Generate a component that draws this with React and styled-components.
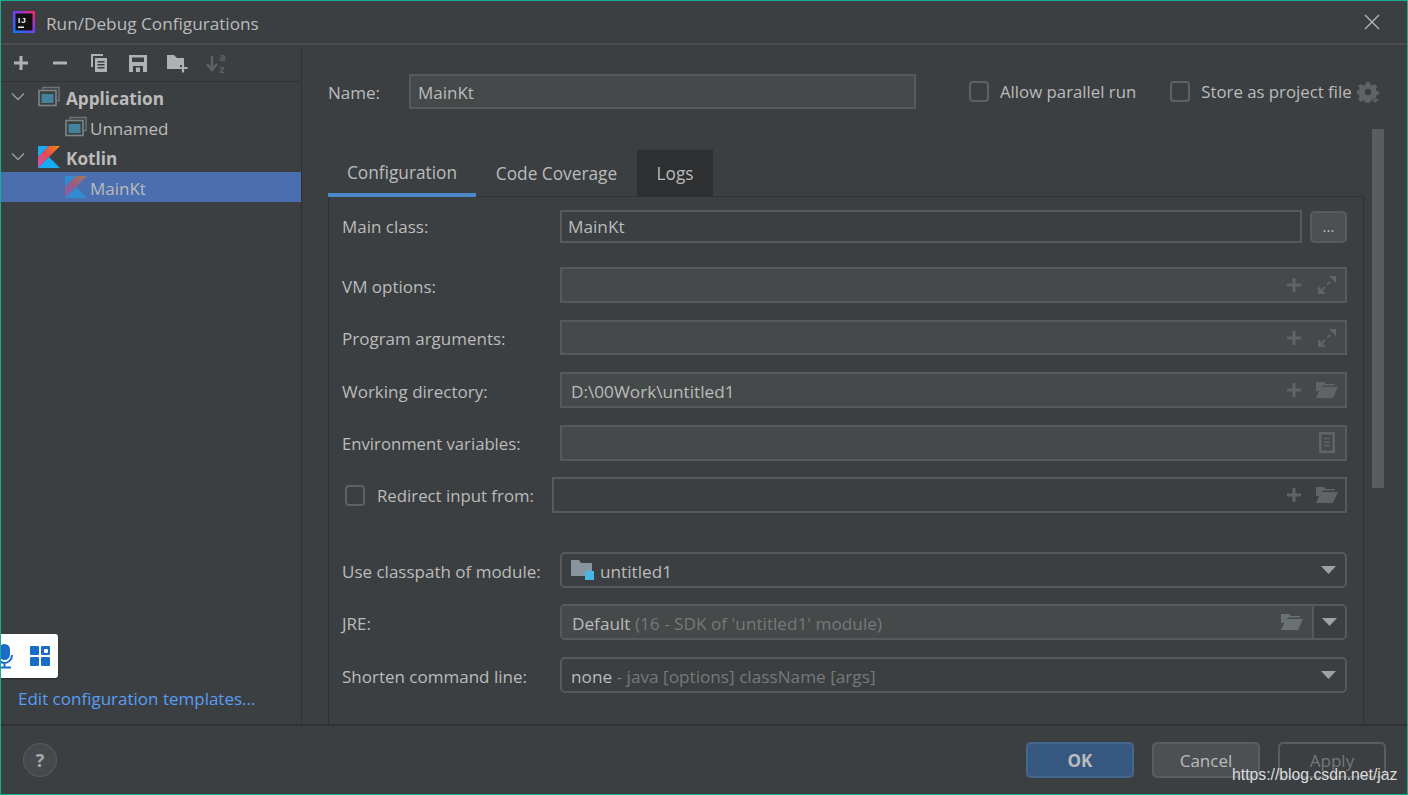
import React from "react";
import styled, { createGlobalStyle } from "styled-components";

const Global = createGlobalStyle`
  html, body { margin: 0; padding: 0; background: #3c3f41; }
  * { box-sizing: border-box; }
  body { font-family: "Open Sans", "Noto Sans", sans-serif; font-size: 17px; color: #bbbbbb; }
`;

const Window = styled.div`
  position: relative;
  width: 1408px; height: 795px; overflow: hidden;
  display: flex; flex-direction: column;
  background: #3c3f41;
  border: 1px solid #12b08f;
`;
const TitleBar = styled.div`
  height: 44px; flex: none;
  display: flex; align-items: center;
  padding: 0 27px 1px 12px;
  border-bottom: 2px solid #4a4c4e;
`;
const TitleText = styled.div`
  margin-left: 11px; flex: 1; font-size: 17.2px; color: #bbbbbb; padding-top: 3px;
`;
const Body = styled.div`
  flex: 1; min-height: 0; display: flex;
`;
const Sidebar = styled.div`
  width: 301px; flex: none;
  display: flex; flex-direction: column;
  border-right: 1px solid #323232;
`;
const Toolbar = styled.div`
  height: 37px; flex: none;
  display: flex; align-items: center; gap: 19px;
  padding-left: 10px;
  border-bottom: 1px solid #323232;
`;
const ToolIcon = styled.svg`
  width: 20px; height: 20px; flex: none; display: block;
`;
const Tree = styled.div`
  display: flex; flex-direction: column;
`;
const TreeRow = styled.div`
  height: 30px;
  display: flex; align-items: center;
  padding-left: ${p => p.$indent}px;
  background: ${p => (p.$selected ? "#4b6eaf" : "transparent")};
  font-weight: ${p => (p.$bold ? 700 : 400)};
  font-size: ${p => (p.$bold ? 17.2 : 17)}px;
  color: #bbbbbb;
`;
const TreeLabel = styled.span`
  padding-top: 2px;
`;
const Chevron = styled.svg`
  width: 14px; height: 10px; margin-right: 13px; flex: none;
`;
const TreeIcon = styled.svg`
  width: 22px; height: 22px; flex: none; margin-right: ${p => p.$gap}px;
`;
const EditLink = styled.div`
  margin-top: auto; padding: 0 0 13px 17px;
  color: #589df6; font-size: 17px; line-height: 24px;
`;

const Main = styled.div`
  flex: 1; min-width: 0; position: relative;
  display: flex; flex-direction: column;
  padding: 29px 0 0 26px;
`;
const NameRow = styled.div`
  height: 35px; flex: none; display: flex; align-items: center;
`;
const NameLabel = styled.div`
  width: 81px; flex: none; font-size: 17px; padding-top: 2px;
`;
const NameInput = styled.div`
  width: 507px; height: 35px; flex: none;
  display: flex; align-items: center; padding: 2px 0 0 7px;
  background: #45494a; border: 2px solid #57595a; font-size: 17px;
`;
const Check = styled.div`
  width: 20px; height: 21px; flex: none;
  background: #3c3f41; border: 2px solid #5f6163; border-radius: 4px;
`;
const CheckLabel = styled.div`
  font-size: 16.8px; margin-left: 11px; white-space: nowrap;
`;
const CheckGroup = styled.div`
  display: flex; align-items: center; margin-left: ${p => p.$ml}px;
`;
const Tabs = styled.div`
  margin-top: 41px; height: 47px; flex: none;
  width: 1036px; display: flex;
  border-bottom: 1px solid #323232;
`;
const Tab = styled.div`
  width: ${p => p.$w}px; height: 47px; flex: none;
  display: flex; align-items: center; justify-content: center;
  padding: ${p => (p.$active ? "2px 0 0" : "0 0 1px")};
  font-size: 17.3px;
  background: ${p => (p.$hover ? "#2d2f31" : "transparent")};
  border-bottom: ${p => (p.$active ? "4px solid #4a88c7" : "none")};
`;
const Panel = styled.div`
  flex: 1; min-height: 0; width: 1036px;
  padding: 13px 16px 0 13px;
  border-left: 1px solid #323232;
  border-right: 1px solid #323232;
  display: flex; flex-direction: column;
`;
const FormRow = styled.div`
  display: grid;
  grid-template-columns: ${p => p.$label || 218}px 1fr;
  align-items: center;
  margin-top: ${p => p.$mt || 0}px;
`;
const FormLabel = styled.div`
  font-size: ${p => p.$size || 17}px; white-space: nowrap; display: flex; align-items: center;
  padding-top: ${p => (p.$nudge ? 2 : 0)}px;
`;
const Field = styled.div`
  height: ${p => p.$h || 36}px;
  display: flex; align-items: center; gap: 13px;
  padding: 0 8px 0 ${p => p.$pl || 8}px;
  background: ${p => (p.$plain ? "transparent" : "#45494a")};
  border: 2px solid #57595a;
  font-size: 17.2px;
`;
const FieldText = styled.div`
  flex: 1; white-space: nowrap;
  padding-top: ${p => (p.$nudge ? 2 : 0)}px;
`;
const ClassRow = styled.div`
  display: flex; gap: 8px; align-items: center;
`;
const ClassField = styled(Field)`
  flex: 1;
`;
const DotsButton = styled.div`
  width: 37px; height: 32px; flex: none;
  background: #4c5052; border: 2px solid #595b5d; border-radius: 5px;
  display: flex; align-items: center; justify-content: center;
  font-size: 15px; padding-bottom: 2px;
`;
const Combo = styled.div`
  height: 36px; display: flex; align-items: stretch;
  border: 2px solid #57595a; border-radius: 5px;
  font-size: 17.2px; overflow: hidden;
`;
const ComboMain = styled.div`
  flex: 1; display: flex; align-items: center; gap: 5px;
  padding: 0 10px 0 ${p => p.$pl || 9}px;
  background: ${p => (p.$disabled ? "#45494a" : "transparent")};
`;
const ComboText = styled.div`
  flex: 1; white-space: nowrap; padding-top: 2px;
`;
const ComboArrow = styled.div`
  width: 33px; flex: none; display: flex; align-items: center; justify-content: center;
  border-left: ${p => (p.$split ? "2px solid #57595a" : "none")};
`;
const Dim = styled.span`
  color: #787878;
`;
const Scrollbar = styled.div`
  position: absolute; left: 1070px; top: 84px;
  width: 12px; height: 359px; background: #5a5c5e;
`;
const Footer = styled.div`
  height: 70px; flex: none;
  display: flex; align-items: center;
  padding: 0 21px 0 22px;
  border-top: 2px solid #323232;
`;
const Help = styled.div`
  width: 34px; height: 34px; border-radius: 50%;
  display: flex; align-items: center; justify-content: center;
  background: #46494b; border: 1.5px solid #5b5d5f;
  font-weight: 700; font-size: 18px; color: #a9abad;
`;
const Buttons = styled.div`
  margin-left: auto; display: flex; gap: 18px;
`;
const Button = styled.div`
  width: 108px; height: 36px;
  display: flex; align-items: center; justify-content: center;
  border-radius: 5px; font-size: 17px;
  font-weight: ${p => (p.$primary ? 700 : 400)};
  color: ${p => (p.$disabled ? "#777777" : "#bbbbbb")};
  background: ${p => (p.$primary ? "#365880" : p.$disabled ? "transparent" : "#4c5052")};
  border: 2px solid ${p => (p.$primary ? "#43688c" : "#5a5c5e")};
`;
const Overlay = styled.div`
  position: absolute; left: -1px; top: 633px;
  width: 58px; height: 44px;
  background: #ffffff; border-radius: 0 3px 3px 0;
  box-shadow: 0 1px 2px rgba(0,0,0,.4);
  display: flex; align-items: center;
`;
const Watermark = styled.div`
  position: absolute; left: 1231px; top: 764px;
  font-family: "Liberation Sans", Arial, sans-serif; font-size: 15.75px;
  color: #dcdcdc; white-space: nowrap; line-height: 20px;
`;

const Plus = ({ c = "#afb1b3" }) => (
  <ToolIcon viewBox="0 0 20 20"><path d="M10 3v14M3 10h14" stroke={c} strokeWidth="3" /></ToolIcon>
);
const Minus = () => (
  <ToolIcon viewBox="0 0 20 20"><path d="M3 10h14" stroke="#afb1b3" strokeWidth="3" /></ToolIcon>
);
const Copy = () => (
  <ToolIcon viewBox="0 0 20 20">
    <path d="M2 1h12v2H4v11H2z" fill="#afb1b3" />
    <path fillRule="evenodd" d="M6 5h12v14H6zM8.5 8v1.5h7V8zM8.5 11v1.5h7V11zM8.5 14v1.5h7V14z" fill="#afb1b3" />
  </ToolIcon>
);
const Save = () => (
  <ToolIcon viewBox="0 0 20 20">
    <path fillRule="evenodd" d="M1 2h18v17H1zM4 4.5v4.5h12V4.5zM5 13v6h10v-6zM8 14.5h4V19H8z" fill="#afb1b3" />
  </ToolIcon>
);
const FolderPlus = () => (
  <ToolIcon viewBox="0 0 22 20" style={{ width: 22, marginRight: -2 }}>
    <path d="M0 2h7l3 3h7v7h-4v4H0z" fill="#afb1b3" />
    <path d="M16 10.5v9M11.5 15h9" stroke="#afb1b3" strokeWidth="2.2" />
  </ToolIcon>
);
const SortAz = () => (
  <ToolIcon viewBox="0 -3 22 26" style={{ width: 22, height: 26 }}>
    <path d="M6 3v12M1 11l5 6 5-6" stroke="#5f6264" strokeWidth="2.4" fill="none" />
    <text x="13.5" y="7.5" fontSize="10" fontWeight="700" fill="#5f6264" fontFamily="Open Sans">a</text>
    <text x="13.5" y="19.5" fontSize="10" fontWeight="700" fill="#5f6264" fontFamily="Open Sans">z</text>
  </ToolIcon>
);
const Down = () => (
  <Chevron viewBox="0 0 14 10"><path d="M1 1.5l6 6 6-6" stroke="#9a9c9e" strokeWidth="1.4" fill="none" /></Chevron>
);
const AppIcon = ({ gap }) => (
  <TreeIcon viewBox="0 0 22 22" $gap={gap}>
    <path d="M5 3.5V1.5h16v13h-2" stroke="#6e7678" strokeWidth="1.4" fill="none" />
    <rect x="1" y="4.5" width="17" height="15" fill="none" stroke="#7b8688" strokeWidth="1.6" />
    <rect x="3.5" y="8" width="12" height="9" fill="#44839e" />
  </TreeIcon>
);
const KotlinIcon = ({ gap, id, dim }) => (
  <TreeIcon viewBox="0 0 22 22" $gap={gap} style={{ opacity: dim ? 0.5 : 1 }}>
    <defs>
      <linearGradient id={id + "a"} x1="0" y1="1" x2="1" y2="0">
        <stop offset="0" stopColor="#c757bc" /><stop offset="0.5" stopColor="#e44857" /><stop offset="1" stopColor="#f88909" />
      </linearGradient>
    </defs>
    <path d="M0 0h11L0 11z" fill="#18a9f7" />
    <path d="M11 0h11L0 22V11z" fill={`url(#${id}a)`} />
    <path d="M11 11l11 11H0z" fill="#18a9f7" />
  </TreeIcon>
);
const Expand = () => (
  <ToolIcon viewBox="0 0 20 20">
    <path d="M1 19l0-8 8 8zM19 1v7l-7-7z" fill="#5f6567" />
    <path d="M5 15l10-10" stroke="#5f6567" strokeWidth="1.8" strokeDasharray="4.5 3" />
  </ToolIcon>
);
const Folder = ({ c = "#5f6567" }) => (
  <ToolIcon viewBox="0 0 24 20" style={{ width: 24, margin: "0 -2px" }}>
    <path d="M1 2h8l2 2h9v1.5H8L4 11H1z" fill={c} />
    <path d="M6 7h17l-5 11H1z" fill={c} />
  </ToolIcon>
);
const Doc = () => (
  <ToolIcon viewBox="0 0 20 22" style={{ height: 22 }}>
    <path fillRule="evenodd" d="M2 0h16v21H2zM4.5 2.5v16h11v-16z" fill="#5f6567" />
    <path d="M7 6.5h6M7 10h6M7 13.5h6" stroke="#5f6567" strokeWidth="1.5" />
  </ToolIcon>
);
const Arrow = () => (
  <svg width="15" height="8" viewBox="0 0 15 8"><path d="M0 0h15l-7.5 8z" fill="#9fa1a3" /></svg>
);
const ModuleFolder = () => (
  <svg width="24" height="22" viewBox="0 0 24 22" style={{ flex: "none" }}>
    <path d="M0 1h8l2 3h11v13H0z" fill="#8a949c" />
    <rect x="14" y="12" width="9" height="9" fill="#45b6e6" />
  </svg>
);

export default function App() {
  return (
    <Window>
      <Global />
      <TitleBar>
        <svg width="22" height="22" viewBox="0 0 22 22" style={{ flex: "none" }}>
          <defs>
            <linearGradient id="ij" x1="0" y1="1" x2="1" y2="0">
              <stop offset="0" stopColor="#087cfa" /><stop offset="0.55" stopColor="#7a3cf0" /><stop offset="1" stopColor="#fe2857" />
            </linearGradient>
          </defs>
          <rect width="22" height="22" fill="url(#ij)" />
          <rect x="2.5" y="2.5" width="17" height="17" fill="#111" />
          <text x="5" y="11.5" fontSize="8" fontWeight="700" fill="#fff" fontFamily="Liberation Sans" letterSpacing="1">IJ</text>
          <rect x="5" y="15.5" width="6" height="1.4" fill="#fff" />
        </svg>
        <TitleText>Run/Debug Configurations</TitleText>
        <svg width="16" height="16" viewBox="0 0 16 16"><path d="M1 1l14 14M15 1L1 15" stroke="#b4b6b8" strokeWidth="1.4" /></svg>
      </TitleBar>
      <Body>
        <Sidebar>
          <Toolbar>
            <Plus /><Minus /><Copy /><Save /><FolderPlus /><SortAz />
          </Toolbar>
          <Tree>
            <TreeRow $indent={10} $bold><Down /><AppIcon gap={6} /><TreeLabel>Application</TreeLabel></TreeRow>
            <TreeRow $indent={64}><AppIcon gap={3} /><TreeLabel>Unnamed</TreeLabel></TreeRow>
            <TreeRow $indent={10} $bold><Down /><KotlinIcon gap={6} id="k1" /><TreeLabel>Kotlin</TreeLabel></TreeRow>
            <TreeRow $indent={64} $selected><KotlinIcon gap={3} id="k2" dim /><TreeLabel>MainKt</TreeLabel></TreeRow>
          </Tree>
          <EditLink>Edit configuration templates...</EditLink>
        </Sidebar>
        <Main>
          <NameRow>
            <NameLabel>Name:</NameLabel>
            <NameInput>MainKt</NameInput>
            <CheckGroup $ml={53}><Check /><CheckLabel>Allow parallel run</CheckLabel></CheckGroup>
            <CheckGroup $ml={34}><Check /><CheckLabel>Store as project file</CheckLabel></CheckGroup>
            <svg width="22" height="22" viewBox="0 0 24 24" style={{ marginLeft: 5, flex: "none" }}>
              <path fillRule="evenodd" fill="#5f6365" d="M10 1h4l.6 3 2.2.9 2.6-1.7 2.8 2.8-1.7 2.6.9 2.2 3 .6v3.2l-3 .6-.9 2.2 1 1.6h-5l-1 3-1.5.6-.6 2.4h-4l-.6-3-2.2-.9-2.6 1.7-2.8-2.8 1.7-2.6-.9-2.2-3-.6v-4l3-.6.9-2.2-1.7-2.6L4.6 3.2l2.6 1.7 2.2-.9zM12 8.5a3.5 3.5 0 100 7 3.5 3.5 0 000-7z" />
              <path d="M16 20h8l-4 4z" fill="#5f6365" />
            </svg>
          </NameRow>
          <Tabs>
            <Tab $w={148} $active>Configuration</Tab>
            <Tab $w={161}>Code Coverage</Tab>
            <Tab $w={76} $hover>Logs</Tab>
          </Tabs>
          <Panel>
            <FormRow>
              <FormLabel>Main class:</FormLabel>
              <ClassRow>
                <ClassField $h={33} $plain $pl={6}><FieldText>MainKt</FieldText></ClassField>
                <DotsButton>...</DotsButton>
              </ClassRow>
            </FormRow>
            <FormRow $mt={24}>
              <FormLabel $nudge>VM options:</FormLabel>
              <Field><FieldText /><Plus c="#5f6567" /><Expand /></Field>
            </FormRow>
            <FormRow $mt={17}>
              <FormLabel $nudge>Program arguments:</FormLabel>
              <Field $h={35}><FieldText /><Plus c="#5f6567" /><Expand /></Field>
            </FormRow>
            <FormRow $mt={17}>
              <FormLabel $nudge>Working directory:</FormLabel>
              <Field $pl={9}><FieldText $nudge>D:\00Work\untitled1</FieldText><Plus c="#5f6567" /><Folder /></Field>
            </FormRow>
            <FormRow $mt={17}>
              <FormLabel $size={16.7}>Environment variables:</FormLabel>
              <Field><FieldText /><Doc /></Field>
            </FormRow>
            <FormRow $mt={16} $label={210}>
              <FormLabel>
                <Check style={{ marginLeft: 3, marginRight: 1 }} />
                <CheckLabel>Redirect input from:</CheckLabel>
              </FormLabel>
              <Field $plain><FieldText /><Plus c="#5f6567" /><Folder /></Field>
            </FormRow>
            <FormRow $mt={39}>
              <FormLabel $nudge>Use classpath of module:</FormLabel>
              <Combo>
                <ComboMain><ModuleFolder /><ComboText>untitled1</ComboText></ComboMain>
                <ComboArrow><Arrow /></ComboArrow>
              </Combo>
            </FormRow>
            <FormRow $mt={16}>
              <FormLabel $nudge>JRE:</FormLabel>
              <Combo>
                <ComboMain $disabled $pl={10}>
                  <ComboText>Default <Dim>(16 - SDK of 'untitled1' module)</Dim></ComboText>
                  <Folder c="#6b7173" />
                </ComboMain>
                <ComboArrow $split><Arrow /></ComboArrow>
              </Combo>
            </FormRow>
            <FormRow $mt={17}>
              <FormLabel $nudge>Shorten command line:</FormLabel>
              <Combo>
                <ComboMain $pl={9}><ComboText>none <Dim>- java [options] className [args]</Dim></ComboText></ComboMain>
                <ComboArrow><Arrow /></ComboArrow>
              </Combo>
            </FormRow>
          </Panel>
          <Scrollbar />
        </Main>
      </Body>
      <Footer>
        <Help>?</Help>
        <Buttons>
          <Button $primary>OK</Button>
          <Button>Cancel</Button>
          <Button $disabled>Apply</Button>
        </Buttons>
      </Footer>
      <Overlay>
        <svg width="16" height="26" viewBox="0 0 16 26" style={{ flex: "none" }}>
          <rect x="-1" y="1" width="11" height="16" rx="5.5" fill="#1a6cc8" />
          <path d="M-3 12c0 5 4 8 7.5 8s7.5-3 7.5-8M4.5 20v4M-2 24.5h13" stroke="#1a6cc8" strokeWidth="2" fill="none" />
        </svg>
        <svg width="20" height="20" viewBox="0 0 20 20" style={{ marginLeft: 14, flex: "none" }}>
          <rect x="0" y="0" width="9" height="9" rx="1" fill="#1a6cc8" />
          <rect x="11" y="0" width="9" height="9" rx="1" fill="#1a6cc8" />
          <rect x="14" y="3" width="4" height="4" rx="1" fill="#fff" />
          <rect x="0" y="11" width="9" height="9" rx="1" fill="#1a6cc8" />
          <rect x="11" y="11" width="9" height="9" rx="1" fill="#1a6cc8" />
        </svg>
      </Overlay>
      <Watermark>https://blog.csdn.net/jaz</Watermark>
    </Window>
  );
}
